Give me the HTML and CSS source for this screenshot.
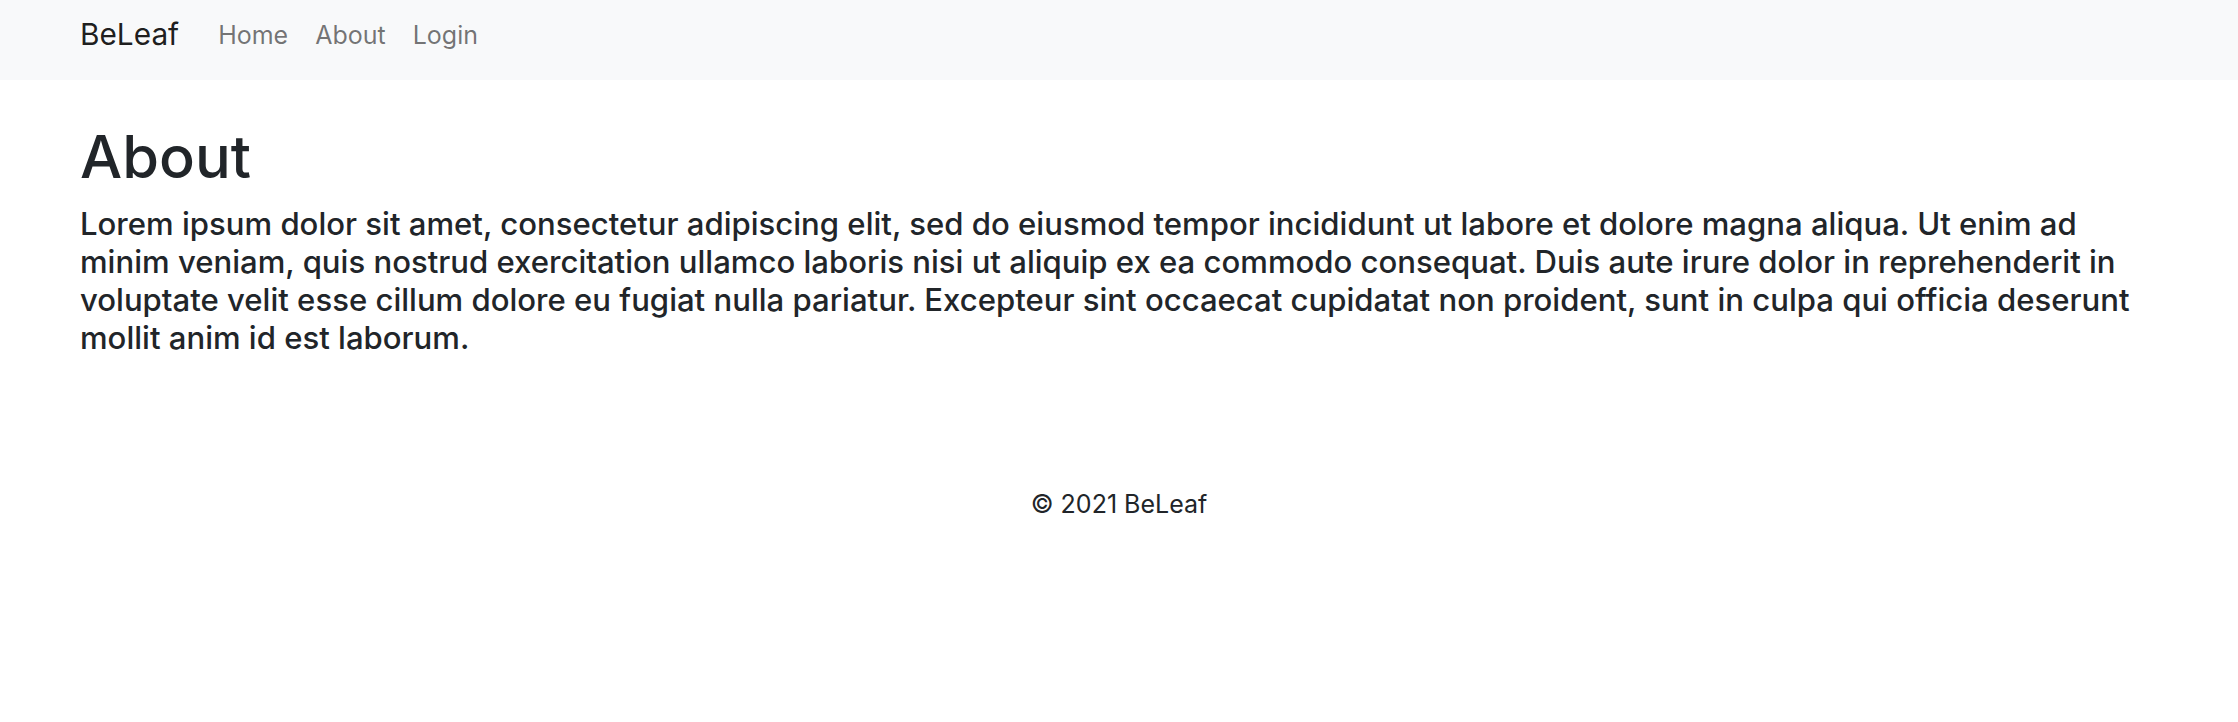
FILE: index.html
```html
<!DOCTYPE html>
<html lang="en">
<head>
<meta charset="utf-8">
<title>About - BeLeaf</title>
<link rel="stylesheet" href="styles.css">
</head>
<body>
<nav class="navbar">
  <div class="nav-inner">
    <a class="brand" href="#">BeLeaf</a>
    <ul class="nav-links">
      <li><a class="nav-link" href="#">Home</a></li>
      <li><a class="nav-link" href="#">About</a></li>
      <li><a class="nav-link" href="#">Login</a></li>
    </ul>
  </div>
</nav>
<main class="content">
  <h1 class="title">About</h1>
  <p class="lead-text">Lorem ipsum dolor sit amet, consectetur adipiscing elit, sed do eiusmod tempor incididunt ut labore et dolore magna aliqua. Ut enim ad minim veniam, quis nostrud exercitation ullamco laboris nisi ut aliquip ex ea commodo consequat. Duis aute irure dolor in reprehenderit in voluptate velit esse cillum dolore eu fugiat nulla pariatur. Excepteur sint occaecat cupidatat non proident, sunt in culpa qui officia deserunt mollit anim id est laborum.</p>
</main>
<footer class="footer">
  <p class="copy">© 2021 BeLeaf</p>
</footer>
</body>
</html>
```
FILE: styles.css
```css
* { box-sizing: border-box; }
html, body { margin: 0; padding: 0; }
body {
  font-family: Inter, "Noto Sans", "Liberation Sans", sans-serif;
  color: #212529;
  background: #fff;
}
a { text-decoration: none; }

.navbar {
  background: #f8f9fa;
  height: 80px;
}
.nav-inner {
  height: 100%;
  padding: 0 80px 11px;
  display: flex;
  align-items: center;
}
.brand {
  font-size: 29.8px;
  color: rgba(0, 0, 0, 0.9);
  margin-right: 39px;
  line-height: 1.5;
}
.nav-links {
  list-style: none;
  margin: 0;
  padding: 0;
  display: flex;
  gap: 27px;
  padding-top: 2px;
}
.nav-link {
  font-size: 25px;
  color: rgba(0, 0, 0, 0.55);
  line-height: 1.5;
}

.content {
  padding: 0 100px 0 80px;
}
.title {
  font-size: 59.5px;
  font-weight: 500;
  line-height: 1.2;
  margin: 41px 0 13px;
}
.lead-text {
  font-size: 31.1px;
  font-weight: 500;
  line-height: 38px;
  margin: 0;
}

.footer {
  padding-top: 129px;
  text-align: center;
}
.copy {
  margin: 0;
  font-size: 25px;
  line-height: 36px;
}
```
